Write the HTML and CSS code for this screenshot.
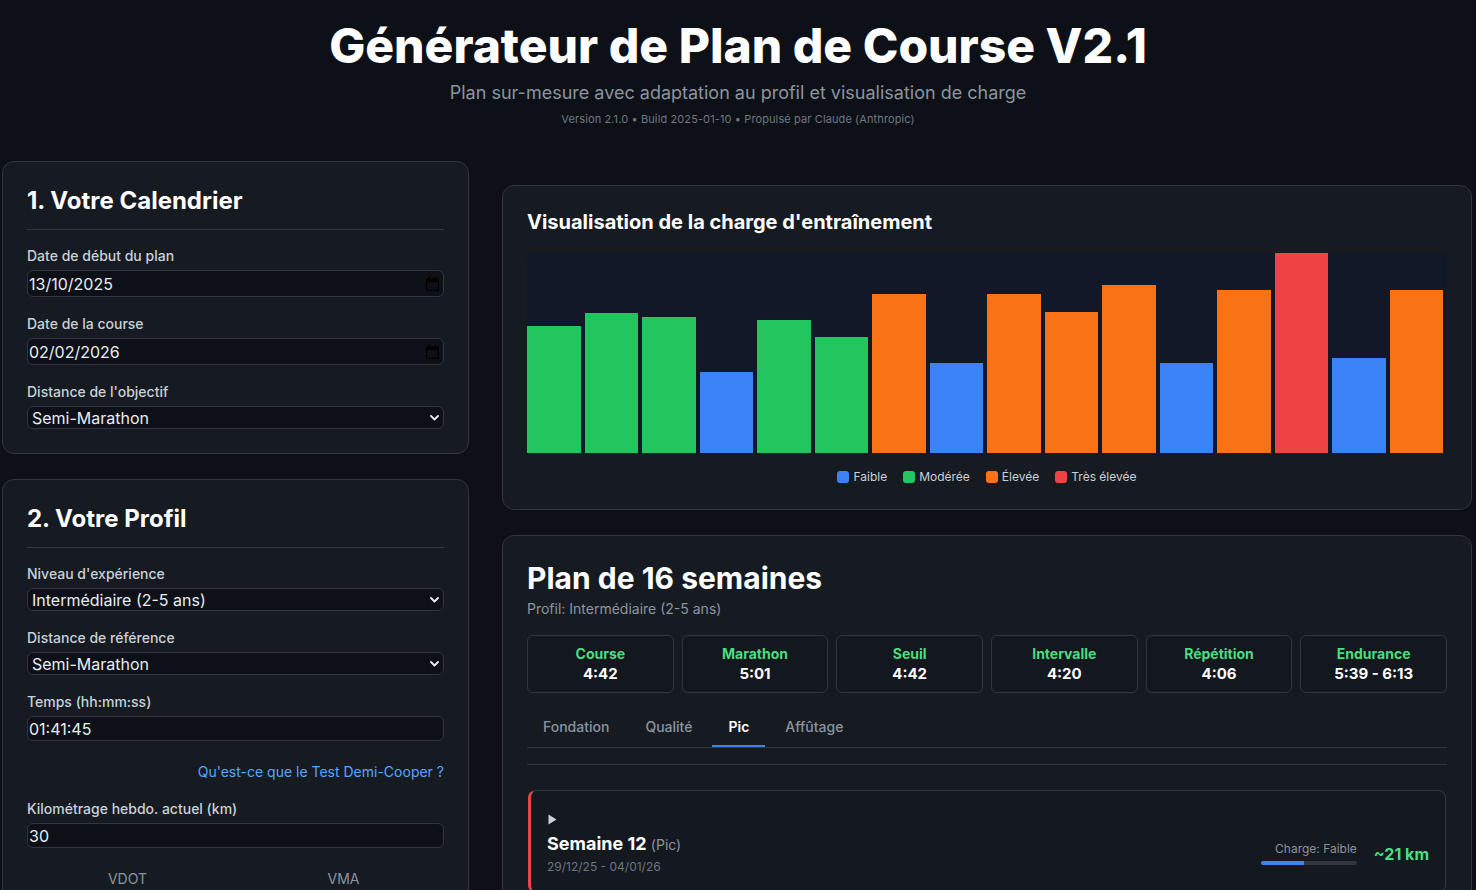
FILE: index.html
```html
<!DOCTYPE html>
<html lang="fr">
<head>
<meta charset="utf-8">
<title>Générateur de Plan de Course V2.1</title>
<link rel="stylesheet" href="styles.css">
</head>
<body>
<header class="hero">
  <h1 class="hero-title">Générateur de Plan de Course V2.1</h1>
  <p class="hero-subtitle">Plan sur-mesure avec adaptation au profil et visualisation de charge</p>
  <p class="hero-version">Version 2.1.0 • Build 2025-01-10 • Propulsé par Claude (Anthropic)</p>
</header>

<main class="layout">
  <aside class="column">
    <section class="card">
      <h2 class="card-title">1. Votre Calendrier</h2>
      <div class="field">
        <label class="field-label">Date de début du plan</label>
        <div class="control control-date">
          <span>13/10/2025</span>
          <svg class="cal-icon" width="13" height="14" viewBox="0 0 13 14"><rect x="2.5" y="0" width="1.6" height="3" fill="#000"/><rect x="8.9" y="0" width="1.6" height="3" fill="#000"/><rect x="0.6" y="2.1" width="11.8" height="11.3" rx="1" fill="none" stroke="#000" stroke-width="1.2"/><rect x="0.6" y="2.1" width="11.8" height="3" fill="#000"/></svg>
        </div>
      </div>
      <div class="field">
        <label class="field-label">Date de la course</label>
        <div class="control control-date">
          <span>02/02/2026</span>
          <svg class="cal-icon" width="13" height="14" viewBox="0 0 13 14"><rect x="2.5" y="0" width="1.6" height="3" fill="#000"/><rect x="8.9" y="0" width="1.6" height="3" fill="#000"/><rect x="0.6" y="2.1" width="11.8" height="11.3" rx="1" fill="none" stroke="#000" stroke-width="1.2"/><rect x="0.6" y="2.1" width="11.8" height="3" fill="#000"/></svg>
        </div>
      </div>
      <div class="field">
        <label class="field-label">Distance de l'objectif</label>
        <div class="control control-select">
          <span>Semi-Marathon</span>
          <svg class="chev" width="9" height="6" viewBox="0 0 9 6"><path d="M1 1l3.5 3.5L8 1" fill="none" stroke="#e6edf3" stroke-width="1.8" stroke-linecap="round" stroke-linejoin="round"/></svg>
        </div>
      </div>
    </section>

    <section class="card">
      <h2 class="card-title">2. Votre Profil</h2>
      <div class="field">
        <label class="field-label">Niveau d'expérience</label>
        <div class="control control-select">
          <span>Intermédiaire (2-5 ans)</span>
          <svg class="chev" width="9" height="6" viewBox="0 0 9 6"><path d="M1 1l3.5 3.5L8 1" fill="none" stroke="#e6edf3" stroke-width="1.8" stroke-linecap="round" stroke-linejoin="round"/></svg>
        </div>
      </div>
      <div class="field">
        <label class="field-label">Distance de référence</label>
        <div class="control control-select">
          <span>Semi-Marathon</span>
          <svg class="chev" width="9" height="6" viewBox="0 0 9 6"><path d="M1 1l3.5 3.5L8 1" fill="none" stroke="#e6edf3" stroke-width="1.8" stroke-linecap="round" stroke-linejoin="round"/></svg>
        </div>
      </div>
      <div class="field">
        <label class="field-label">Temps (hh:mm:ss)</label>
        <div class="control control-text"><span>01:41:45</span></div>
      </div>
      <div class="field field-link">
        <a class="help-link">Qu'est-ce que le Test Demi-Cooper ?</a>
      </div>
      <div class="field">
        <label class="field-label">Kilométrage hebdo. actuel (km)</label>
        <div class="control control-text"><span>30</span></div>
      </div>
      <div class="stats">
        <div class="stat">VDOT</div>
        <div class="stat">VMA</div>
      </div>
    </section>
  </aside>

  <div class="column column-main">
    <section class="card">
      <h2 class="section-title">Visualisation de la charge d'entraînement</h2>
      <div class="chart">
        <div class="bar bar-mod" style="height:127px"></div>
        <div class="bar bar-mod" style="height:140px"></div>
        <div class="bar bar-mod" style="height:136px"></div>
        <div class="bar bar-low" style="height:81px"></div>
        <div class="bar bar-mod" style="height:133px"></div>
        <div class="bar bar-mod" style="height:116px"></div>
        <div class="bar bar-high" style="height:159px"></div>
        <div class="bar bar-low" style="height:90px"></div>
        <div class="bar bar-high" style="height:159px"></div>
        <div class="bar bar-high" style="height:141px"></div>
        <div class="bar bar-high" style="height:168px"></div>
        <div class="bar bar-low" style="height:90px"></div>
        <div class="bar bar-high" style="height:163px"></div>
        <div class="bar bar-max" style="height:200px"></div>
        <div class="bar bar-low" style="height:95px"></div>
        <div class="bar bar-high" style="height:163px"></div>
      </div>
      <div class="legend">
        <span class="legend-item"><i class="swatch bar-low"></i>Faible</span>
        <span class="legend-item"><i class="swatch bar-mod"></i>Modérée</span>
        <span class="legend-item"><i class="swatch bar-high"></i>Élevée</span>
        <span class="legend-item"><i class="swatch bar-max"></i>Très élevée</span>
      </div>
    </section>

    <section class="card">
      <h2 class="plan-title">Plan de 16 semaines</h2>
      <p class="plan-profile">Profil: Intermédiaire (2-5 ans)</p>
      <div class="paces">
        <div class="pace"><div class="pace-label">Course</div><div class="pace-value">4:42</div></div>
        <div class="pace"><div class="pace-label">Marathon</div><div class="pace-value">5:01</div></div>
        <div class="pace"><div class="pace-label">Seuil</div><div class="pace-value">4:42</div></div>
        <div class="pace"><div class="pace-label">Intervalle</div><div class="pace-value">4:20</div></div>
        <div class="pace"><div class="pace-label">Répétition</div><div class="pace-value">4:06</div></div>
        <div class="pace"><div class="pace-label">Endurance</div><div class="pace-value">5:39 - 6:13</div></div>
      </div>
      <nav class="tabs">
        <span class="tab">Fondation</span>
        <span class="tab">Qualité</span>
        <span class="tab tab-active">Pic</span>
        <span class="tab">Affûtage</span>
      </nav>
      <div class="plan-divider"></div>
      <div class="weeks">
        <article class="week">
          <div class="week-toggle"><svg width="9" height="11" viewBox="0 0 9 11"><path d="M0.5 0.5L8.5 5.5L0.5 10.5Z" fill="#c9d1d9"/></svg></div>
          <div class="week-row">
            <div class="week-info">
              <div class="week-title">Semaine 12 <span class="week-phase">(Pic)</span></div>
              <div class="week-dates">29/12/25 - 04/01/26</div>
            </div>
            <div class="week-meta">
              <div class="load">
                <div class="load-label">Charge: Faible</div>
                <div class="load-track"><div class="load-fill" style="width:45%"></div></div>
              </div>
              <div class="week-km">~21 km</div>
            </div>
          </div>
        </article>
      </div>
    </section>
  </div>
</main>
</body>
</html>
```

FILE: styles.css
```css
* { box-sizing: border-box; }
html { scrollbar-width: none; }
html, body { margin: 0; }
body {
  background: #0d1117;
  color: #e6edf3;
  font-family: Inter, "Noto Sans", "Liberation Sans", sans-serif;
}

.hero {
  text-align: center;
  padding-top: 17px;
  margin-bottom: 33px;
}
.hero-title {
  margin: 0;
  font-size: 48px;
  line-height: 58px;
  font-weight: 800;
  color: #ffffff;
}
.hero-subtitle {
  margin: 4px 0 0;
  font-size: 18px;
  line-height: 27px;
  color: #8b949e;
}
.hero-version {
  margin: 4px 0 0;
  font-size: 11px;
  line-height: 18px;
  color: #6e7681;
  letter-spacing: 0.01em;
}

.layout {
  display: grid;
  grid-template-columns: 467px 970px;
  column-gap: 33px;
  padding: 0 4px 0 2px;
  align-items: start;
}
.column {
  display: flex;
  flex-direction: column;
  gap: 25px;
}
.column-main { margin-top: 24px; }

.card {
  background: #161b22;
  border: 1px solid #30363d;
  border-radius: 12px;
  padding: 24px;
}
.card-title {
  margin: 0 0 16px;
  padding-bottom: 14px;
  border-bottom: 1px solid #30363d;
  font-size: 24px;
  line-height: 29px;
  font-weight: 700;
  color: #ffffff;
}

.field { margin-bottom: 17px; }
.field:last-child { margin-bottom: 0; }
.field-label {
  display: block;
  margin-bottom: 4px;
  font-size: 14px;
  line-height: 20px;
  font-weight: 500;
  color: #c9d1d9;
}
.control {
  display: flex;
  align-items: center;
  justify-content: space-between;
  background: #0d1117;
  border: 1px solid #30363d;
  border-radius: 6px;
  color: #e6edf3;
  font-size: 16px;
}
.control-date { height: 27px; padding: 0 4px 0 1px; }
.control-select { height: 23px; padding: 0 4px 0 4px; }
.control-text { height: 25px; padding: 0 1px; }
.cal-icon { display: block; }
.chev { display: block; }

.field-link {
  padding-top: 3px;
  text-align: right;
  line-height: 20px;
}
.help-link {
  font-size: 14px;
  color: #58a6ff;
  text-decoration: none;
}

.stats {
  display: grid;
  grid-template-columns: 1fr 1fr;
  column-gap: 15px;
  margin-top: 21px;
}
.stat {
  text-align: center;
  font-size: 14px;
  line-height: 20px;
  color: #8b949e;
}

.section-title {
  margin: 0 0 19px;
  font-size: 20px;
  line-height: 24px;
  font-weight: 700;
  color: #ffffff;
}
.chart {
  display: flex;
  align-items: flex-end;
  gap: 4px;
  height: 200px;
  padding-right: 4px;
  background: #111827;
  border-radius: 4px;
}
.bar { flex: 1; }
.bar-low { background: #3b82f6; }
.bar-mod { background: #22c55e; }
.bar-high { background: #f97316; }
.bar-max { background: #ef4444; }

.legend {
  display: flex;
  justify-content: center;
  gap: 16px;
  margin-top: 16px;
  font-size: 12px;
  line-height: 16px;
  color: #c9d1d9;
}
.legend-item {
  display: flex;
  align-items: center;
  gap: 4px;
}
.swatch {
  display: block;
  width: 12px;
  height: 12px;
  border-radius: 3px;
}

.plan-title {
  margin: 0;
  font-size: 30px;
  line-height: 36px;
  font-weight: 700;
  color: #ffffff;
}
.plan-profile {
  margin: 3px 0 0;
  font-size: 14px;
  line-height: 20px;
  color: #8b949e;
}
.paces {
  display: grid;
  grid-template-columns: repeat(6, 1fr);
  gap: 8px;
  margin-top: 16px;
}
.pace {
  background: #13171e;
  border: 1px solid #30363d;
  border-radius: 6px;
  padding: 8px;
  text-align: center;
}
.pace-label {
  font-size: 14px;
  line-height: 20px;
  font-weight: 700;
  color: #4ade80;
}
.pace-value {
  font-size: 15px;
  line-height: 20px;
  font-weight: 700;
  color: #ffffff;
}

.tabs {
  display: flex;
  gap: 4px;
  margin-top: 19px;
  border-bottom: 1px solid #30363d;
}
.tab {
  padding: 5px 16px 8px;
  font-size: 14px;
  line-height: 20px;
  font-weight: 500;
  color: #8b949e;
  border-bottom: 2px solid transparent;
}
.tab-active {
  color: #ffffff;
  font-weight: 600;
  border-bottom-color: #3b82f6;
}
.plan-divider {
  height: 1px;
  background: #30363d;
  margin: 16px 0 25px;
}

.weeks { padding: 0 1px; }
.week {
  background: #14181f;
  border: 1px solid #30363d;
  border-left: 3px solid #ef4444;
  border-radius: 8px;
  padding: 16px;
}
.week-toggle {
  height: 24px;
  display: flex;
  align-items: center;
  padding-left: 1px;
}
.week-toggle svg { display: block; }
.week-row {
  display: flex;
  align-items: center;
  justify-content: space-between;
  margin-top: 1px;
}
.week-title {
  font-size: 18px;
  line-height: 24px;
  font-weight: 700;
  color: #ffffff;
}
.week-phase {
  font-size: 14px;
  font-weight: 400;
  color: #8b949e;
}
.week-dates {
  margin-top: 1px;
  font-size: 12px;
  line-height: 18px;
  color: #6e7681;
}
.week-meta {
  display: flex;
  align-items: center;
  gap: 17px;
}
.load {
  width: 96px;
  text-align: right;
  margin-top: -3px;
}
.load-label {
  font-size: 12px;
  line-height: 16px;
  color: #8b949e;
}
.load-track {
  margin-top: 4px;
  height: 4px;
  border-radius: 2px;
  background: #30363d;
  overflow: hidden;
}
.load-fill {
  height: 100%;
  background: #3b82f6;
}
.week-km {
  font-size: 16px;
  line-height: 20px;
  font-weight: 700;
  color: #4ade80;
}
```
